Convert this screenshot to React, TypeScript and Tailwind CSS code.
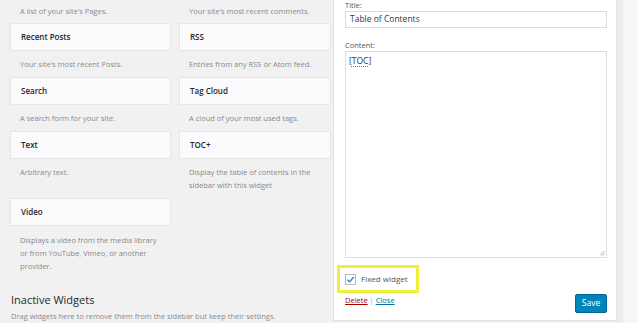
import { Fragment } from "react";

const font = { fontFamily: '"Open Sans", "Noto Sans", sans-serif' };

type Widget = { name: string; desc: string[] };

const rows: [Widget, Widget][] = [
  [
    { name: "Recent Posts", desc: ["Your site\u2019s most recent Posts."] },
    { name: "RSS", desc: ["Entries from any RSS or Atom feed."] },
  ],
  [
    { name: "Search", desc: ["A search form for your site."] },
    { name: "Tag Cloud", desc: ["A cloud of your most used tags."] },
  ],
  [
    { name: "Text", desc: ["Arbitrary text."] },
    { name: "TOC+", desc: ["Display the table of contents in the", "sidebar with this widget"] },
  ],
];

function WidgetCell({ w }: { w: Widget }) {
  return (
    <div>
      <div className="flex h-[28px] items-center border border-[#e6e5e8] bg-[#fbfafc] pl-[10px] text-[8px] font-semibold text-[#23282d]">
        {w.name}
      </div>
      <div className="pb-[6px] pl-[10px] pt-[7px] text-[7.5px] leading-[13px] text-[#8a898d]">
        {w.desc.map((line) => (
          <div key={line}>{line}</div>
        ))}
      </div>
    </div>
  );
}

function AvailableWidgets() {
  return (
    <div className="w-[333px] shrink-0 pl-[10px]">
      <div className="grid grid-cols-[161px_152px] gap-x-[8px]">
        <div className="flex h-[23px] items-center pl-[10px] text-[7.5px] text-[#8a898d]">
          A list of your site&rsquo;s Pages.
        </div>
        <div className="flex h-[23px] items-center pl-[10px] text-[7.5px] text-[#8a898d]">
          Your site&rsquo;s most recent comments.
        </div>
        {rows.map(([a, b]) => (
          <Fragment key={a.name}>
            <WidgetCell w={a} />
            <WidgetCell w={b} />
          </Fragment>
        ))}
        <div>
          <div className="flex h-[28px] items-center border border-[#e6e5e8] bg-[#fbfafc] pl-[10px] text-[8px] font-semibold text-[#23282d]">
            Video
          </div>
          <div className="pl-[10px] pt-[8px] text-[7.5px] leading-[13px] text-[#8a898d]">
            <div>Displays a video from the media library</div>
            <div>or from YouTube, Vimeo, or another</div>
            <div>provider.</div>
          </div>
        </div>
      </div>
      <h2 className="mt-[20px] pl-[1px] text-[11px] font-medium leading-[14px] text-[#23282d]">Inactive Widgets</h2>
      <p className="mt-[3px] whitespace-nowrap pl-[1px] text-[7.5px] leading-[13px] text-[#8a898d]">
        Drag widgets here to remove them from the sidebar but keep their settings.
      </p>
    </div>
  );
}

function WidgetForm() {
  return (
    <div className="w-[284px] shrink-0 self-start border-x border-b border-[#e2e2e4] bg-white pb-[7px] pl-[11px] pr-[9px] text-[#32373c]">
      <div className="text-[7.5px] leading-[10px] text-[#555]">Title:</div>
      <div className="mt-[1px] flex h-[17px] items-center border border-[#dcdcde] pl-[4px] text-[8.5px]">
        Table of Contents
      </div>
      <div className="mt-[12px] text-[7.5px] leading-[10px] text-[#555]">Content:</div>
      <div className="relative mt-[1px] h-[207px] border border-[#dcdcde] pl-[3px] pt-[3px] text-[8.5px] leading-[12px]">
        [<span className="underline decoration-[#d05050] decoration-dotted underline-offset-2">TOC</span>]
        <svg className="absolute bottom-[1px] right-[1px]" width="6" height="6" viewBox="0 0 6 6">
          <path d="M5.5 1 L1 5.5 M5.5 3.5 L3.5 5.5" stroke="#999" strokeWidth="0.8" />
        </svg>
      </div>
      <div className="-ml-[8px] mt-[7px] flex h-[28px] w-[82px] items-center gap-[5px] border-[3px] border-[#eef03c] pl-[5px]">
        <div className="flex h-[11px] w-[11px] items-center justify-center border border-[#b4b9be] bg-white">
          <svg width="9" height="9" viewBox="0 0 10 10">
            <path d="M1.5 5.2 L4 7.6 L8.6 2.2" fill="none" stroke="#1e8cbe" strokeWidth="1.5" />
          </svg>
        </div>
        <span className="text-[8px] text-[#555]">Fixed widget</span>
      </div>
      <div className="mt-[1px] flex items-start justify-between">
        <div className="pt-[1px] text-[7.5px] leading-[10px] text-[#aaa]">
          <span className="text-[#a00] underline">Delete</span> |{" "}
          <span className="text-[#0073aa] underline">Close</span>
        </div>
        <button className="flex h-[19px] w-[32px] items-center justify-center rounded-[2px] border border-[#006799] bg-[#0085ba] text-[8.5px] text-white">
          Save
        </button>
      </div>
    </div>
  );
}

export default function App() {
  return (
    <div className="flex h-[323px] w-[638px] overflow-hidden bg-[#f1f1f2]" style={font}>
      <AvailableWidgets />
      <WidgetForm />
      <div className="w-[6px] shrink-0 bg-[#ececee]" />
      <div className="flex-1 bg-[#f7f7f8]" />
    </div>
  );
}
